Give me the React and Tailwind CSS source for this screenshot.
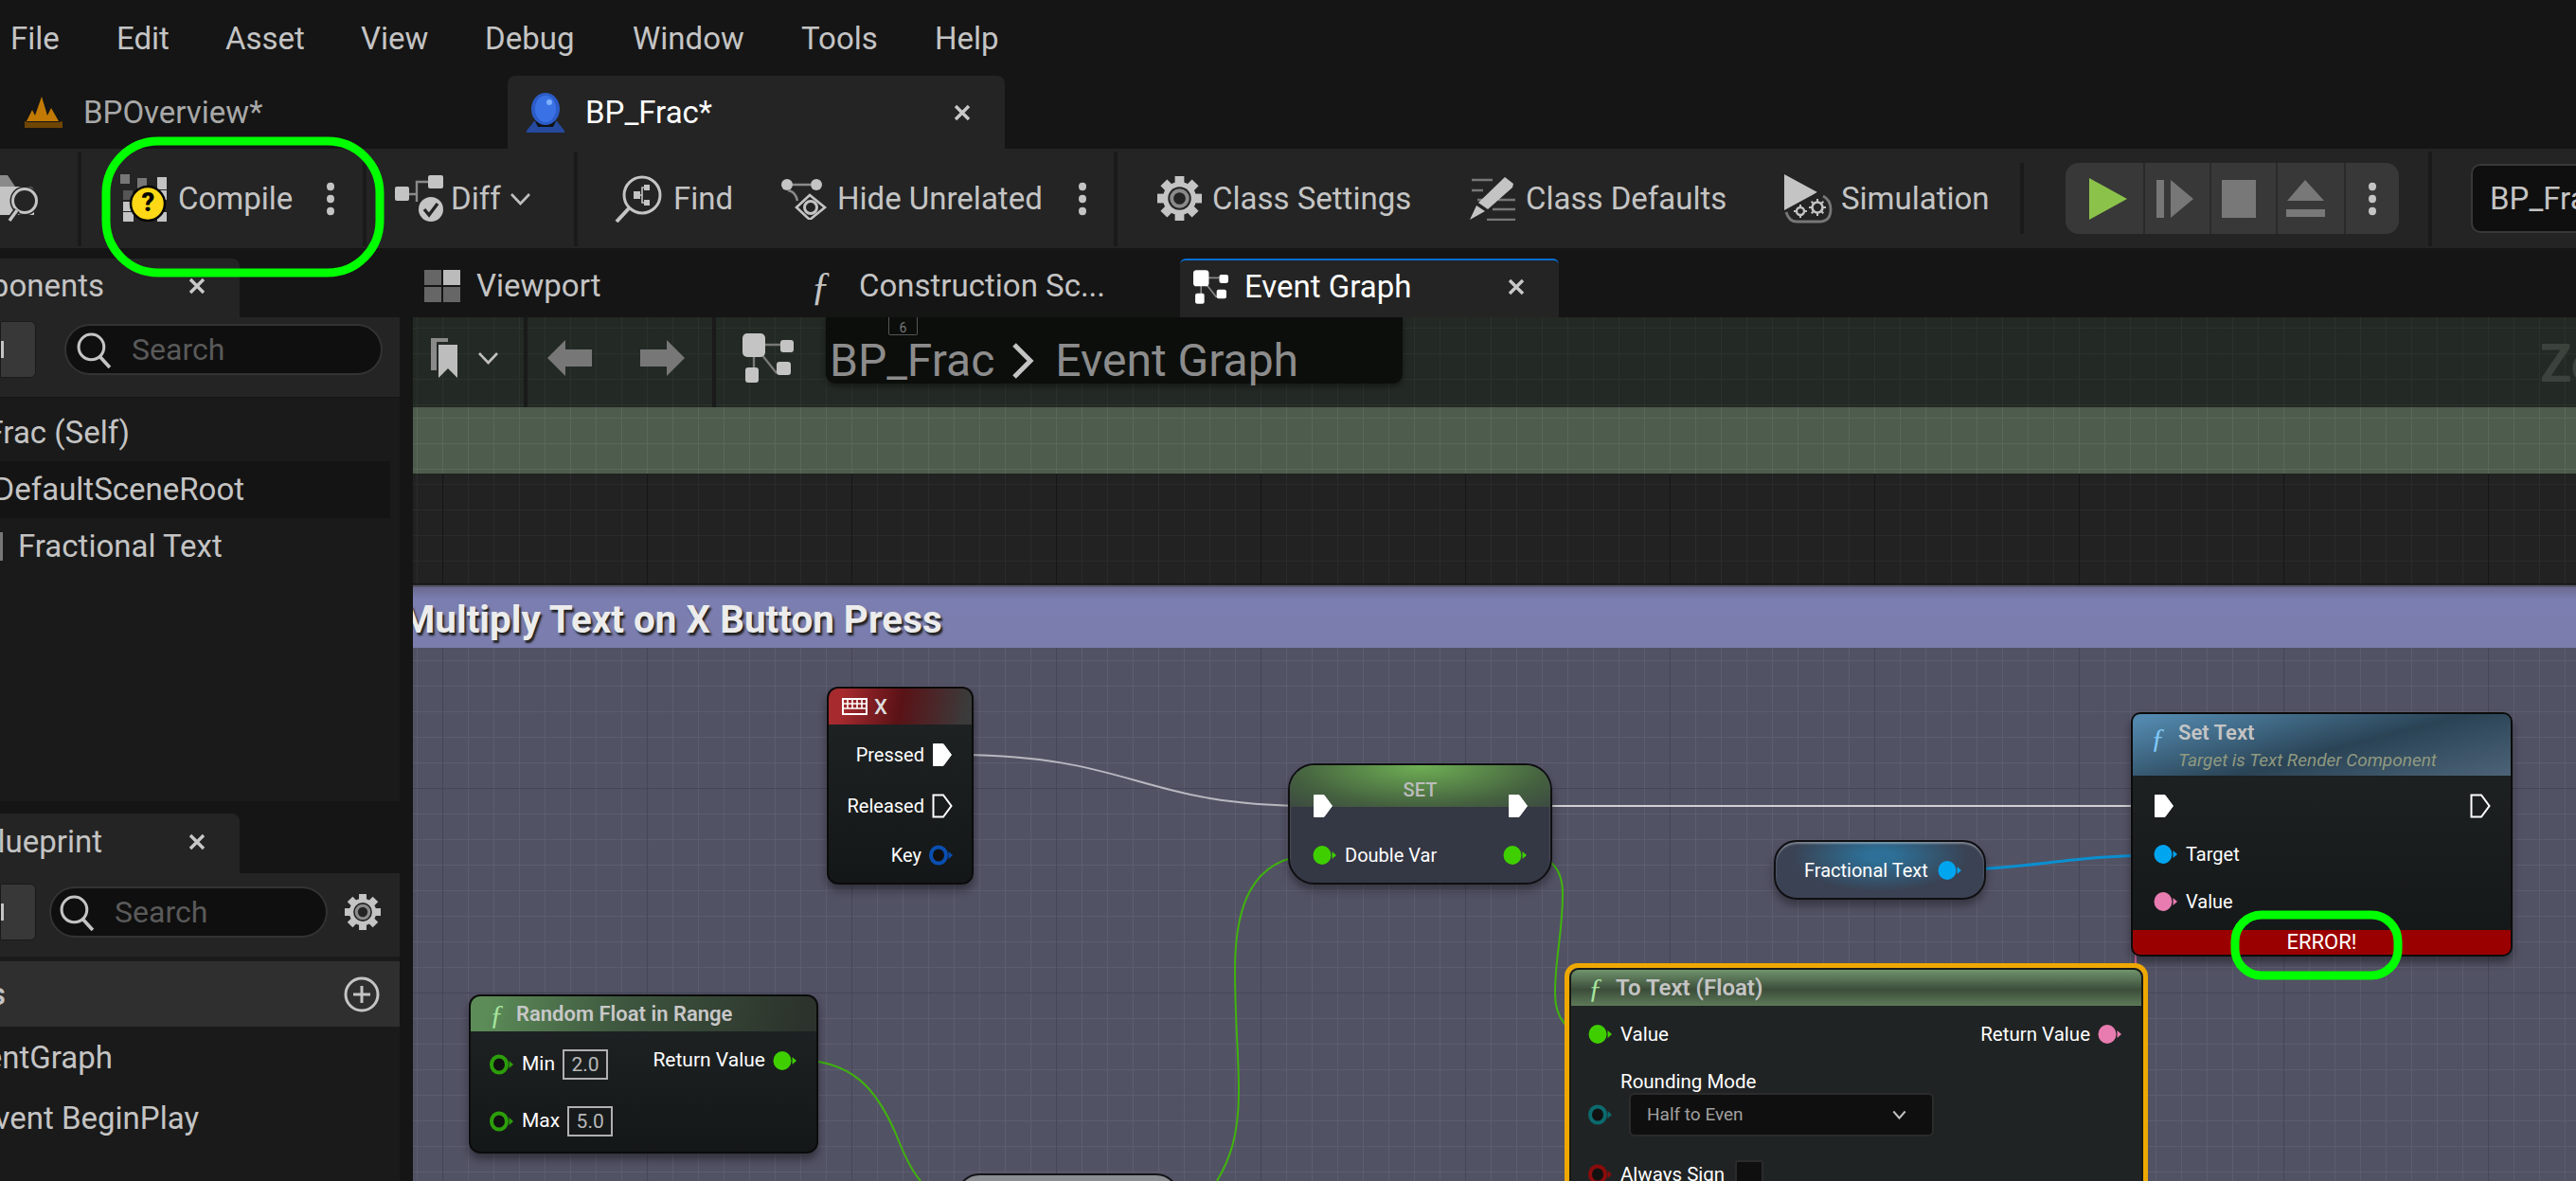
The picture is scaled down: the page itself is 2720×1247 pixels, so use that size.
import React from "react";

const Sep = ({ cls = "h-[100px]" }) => <div className={`w-1 shrink-0 bg-[#1a1a1a] ${cls}`} />;

const Dots = ({ cls = "" }) => (
  <svg width="12" height="36" viewBox="0 0 12 36" className={`shrink-0 ${cls}`}>
    <ellipse cx="6" cy="5" rx="4" ry="4.2" fill="#c4c4c4" />
    <ellipse cx="6" cy="18" rx="4" ry="4.2" fill="#c4c4c4" />
    <ellipse cx="6" cy="31" rx="4" ry="4.2" fill="#c4c4c4" />
  </svg>
);

const CloseX = ({ cls = "" }) => (
  <svg width="20" height="20" viewBox="0 0 20 20" className={`shrink-0 ${cls}`}>
    <path d="M3 3 17 17M17 3 3 17" stroke="#c8c8c8" strokeWidth="3.4" />
  </svg>
);

const Chevron = ({ w = 23, h = 14, c = "#c0c0c0", sw = 2.6 }) => (
  <svg width={w} height={h} viewBox="0 0 23 14" className="shrink-0" preserveAspectRatio="none">
    <path d="M2 2 11.5 12 21 2" fill="none" stroke={c} strokeWidth={sw} />
  </svg>
);

const Mag = ({ size = 38, c = "#c4c4c4" }) => (
  <svg width={size} height={size} viewBox="0 0 38 38" className="shrink-0">
    <circle cx="16" cy="16" r="13" fill="none" stroke={c} strokeWidth="3" />
    <path d="M25 26 35 37" stroke={c} strokeWidth="3.6" />
  </svg>
);

const CompileIcon = () => (
  <div className="relative w-[50px] h-[52px] shrink-0">
    <svg width="50" height="50" viewBox="0 0 50 50" className="absolute top-0 left-0">
      <rect x="0" y="0" width="10" height="10" fill="#777" />
      <rect x="18" y="4" width="10" height="12" fill="#777" />
      <rect x="39" y="3" width="10" height="13" fill="#c4c4c4" />
      <rect x="3" y="17" width="10" height="10" fill="#555" />
      <rect x="3" y="29" width="10" height="10" fill="#c4c4c4" />
      <rect x="3" y="40" width="11" height="10" fill="#c4c4c4" />
      <rect x="39" y="17" width="10" height="10" fill="#c4c4c4" />
      <rect x="39" y="40" width="10" height="10" fill="#c4c4c4" />
      <ellipse cx="29" cy="31" rx="18" ry="18" fill="#ffd816" stroke="#050505" strokeWidth="2.5" />
    </svg>
    <span className="absolute left-[21px] top-[14px] w-[17px] text-center text-[27px] leading-[32px] font-black text-black">?</span>
  </div>
);

const CameraIcon = () => (
  <svg width="44" height="52" viewBox="0 0 44 52" className="shrink-0">
    <path d="M0 2H10L18 14H0Z" fill="#8a8a8a" />
    <path d="M0 14H32Q38 14 38 20V44H0Z" fill="#c4c4c4" />
    <circle cx="28" cy="29" r="15.5" fill="#242424" />
    <circle cx="28" cy="29" r="12.5" fill="#242424" stroke="#c4c4c4" strokeWidth="3" />
    <path d="M20 39 12 50" stroke="#242424" strokeWidth="7" />
    <path d="M20 39 12 50" stroke="#c4c4c4" strokeWidth="3.4" />
  </svg>
);

const DiffIcon = () => (
  <svg width="52" height="50" viewBox="0 0 52 50" className="shrink-0">
    <rect x="0" y="12" width="15" height="15" rx="2" fill="#c4c4c4" />
    <rect x="35" y="0" width="16" height="14" rx="2" fill="#c4c4c4" />
    <path d="M15 20H23V7H35M23 20V28" fill="none" stroke="#8a8a8a" strokeWidth="2.4" />
    <circle cx="38" cy="36" r="13" fill="#c4c4c4" />
    <path d="M31 36 36 42 45 30" fill="none" stroke="#242424" strokeWidth="3.4" />
  </svg>
);

const FindIcon = () => (
  <svg width="50" height="50" viewBox="0 0 50 50" className="shrink-0">
    <circle cx="29" cy="21" r="19" fill="none" stroke="#c4c4c4" strokeWidth="3" />
    <path d="M15 35 2 49" stroke="#c4c4c4" strokeWidth="4" />
    <rect x="20" y="17" width="7" height="8" fill="#c4c4c4" />
    <rect x="31" y="10" width="6" height="6" fill="#c4c4c4" />
    <rect x="31" y="26" width="6" height="6" fill="#c4c4c4" />
    <path d="M27 21H29V13H31M29 21V29H31" fill="none" stroke="#c4c4c4" strokeWidth="1.6" />
  </svg>
);

const HideIcon = () => (
  <svg width="50" height="44" viewBox="0 0 50 44" className="shrink-0">
    <circle cx="7" cy="7" r="6" fill="#c4c4c4" />
    <circle cx="38" cy="7" r="6" fill="#c4c4c4" />
    <path d="M13 7H32M8 13Q16 14 18 24" fill="none" stroke="#8a8a8a" strokeWidth="2.6" />
    <path d="M17 31 31 18 47 31 31 44Z" fill="none" stroke="#c4c4c4" strokeWidth="2.6" />
    <circle cx="32" cy="31" r="6.5" fill="none" stroke="#c4c4c4" strokeWidth="3" />
  </svg>
);

const Gear = ({ size = 47, hole = "#8a8a8a", bg = "#242424" }) => (
  <svg width={size} height={size} viewBox="0 0 48 48" className="shrink-0">
    <g fill="#c4c4c4">
      {[0, 45, 90, 135, 180, 225, 270, 315].map((a) => (
        <rect key={a} x="19" y="0" width="10" height="12" transform={`rotate(${a} 24 24)`} />
      ))}
      <circle cx="24" cy="24" r="18" />
    </g>
    <circle cx="24" cy="24" r="12.5" fill={bg} />
    <circle cx="24" cy="24" r="8.5" fill="none" stroke={hole} strokeWidth="4" />
  </svg>
);

const DefaultsIcon = () => (
  <svg width="48" height="46" viewBox="0 0 48 46" className="shrink-0">
    <path d="M2 3H24M2 14H14M8 24H14M30 24H48M24 34H48M18 45H48" stroke="#777" strokeWidth="2.4" />
    <path d="M37 0 46 7 45 11 19 34 9 27Z" fill="#c4c4c4" />
    <path d="M7 30 16 36 0 45Z" fill="#c4c4c4" />
  </svg>
);

const SimIcon = () => (
  <svg width="52" height="52" viewBox="0 0 52 52" className="shrink-0">
    <path d="M1 0 36 19 1 38Z" fill="#c4c4c4" />
    <path d="M38 20 9 40" stroke="#242424" strokeWidth="4" />
    <path d="M3 40Q6 50 14 50H38Q50 50 50 37 50 27 42 23" fill="none" stroke="#777" strokeWidth="2.8" />
    <circle cx="36" cy="35" r="5.5" fill="none" stroke="#c4c4c4" strokeWidth="2.6" />
    <circle cx="18" cy="39" r="4" fill="none" stroke="#c4c4c4" strokeWidth="2.4" />
    <path d="M36 26V44M27 35H45M29.6 28.6 42.4 41.4M42.4 28.6 29.6 41.4" stroke="#c4c4c4" strokeWidth="2" strokeDasharray="3 12" />
    <path d="M18 32V46M11 39H25" stroke="#c4c4c4" strokeWidth="2" strokeDasharray="3 8" />
  </svg>
);

const Crown = () => (
  <svg width="40" height="34" viewBox="0 0 40 34" className="shrink-0">
    <path d="M2 26 8 14 11 20 18 0 24 20 28 12 36 26Z" fill="#c27a05" />
    <path d="M0 26 4 27H36L40 26V33H0Z" fill="#6e4503" />
  </svg>
);

const BlueBall = () => (
  <svg width="40" height="42" viewBox="0 0 40 42" className="shrink-0">
    <path d="M8 30H32L40 40V42H0V40Z" fill="#254a9e" />
    <path d="M9 30H31L28 36H12Z" fill="#111" />
    <ellipse cx="20" cy="17" rx="15" ry="17" fill="#2c5cc8" />
    <ellipse cx="20" cy="17" rx="11" ry="14" fill="#3a72e6" />
    <ellipse cx="24" cy="10" rx="3" ry="3" fill="#7fb0ff" />
  </svg>
);

const GraphIcon = ({ main = "#c4c4c4", line = "#777", w = 54, h = 52 }) => (
  <svg width={w} height={h} viewBox="0 0 54 52" className="shrink-0">
    <path d="M12 12H40M12 12V42M12 12 36 42" fill="none" stroke={line} strokeWidth="2.4" />
    <rect x="0" y="0" width="24" height="25" rx="5" fill={main} />
    <rect x="40" y="7" width="14" height="13" rx="3" fill={main} />
    <rect x="3" y="36" width="14" height="16" rx="3" fill={main} />
    <rect x="36" y="30" width="15" height="14" rx="3" fill={main} />
  </svg>
);

const FGlyph = ({ cls = "", color = "#c4c4c4" }) => (
  <span className={`font-['Liberation_Serif',serif] italic shrink-0 ${cls}`} style={{ color }}>ƒ</span>
);

const Exec = ({ filled = true, cls = "" }) => (
  <svg width="22" height="26" viewBox="0 0 22 26" className={`shrink-0 ${cls}`}>
    <path d="M1.5 1.5H12L20.5 13 12 24.5H1.5Z" fill={filled ? "#fff" : "none"} stroke="#fff" strokeWidth={filled ? 1 : 2} />
  </svg>
);

const Pin = ({ color, filled = true, cls = "" }) => (
  <svg width="26" height="24" viewBox="0 0 26 24" className={`shrink-0 ${cls}`}>
    {filled ? (
      <ellipse cx="10" cy="12" rx="9.5" ry="10" fill={color} />
    ) : (
      <ellipse cx="10" cy="12" rx="8" ry="8.5" fill="#111" stroke={color} strokeWidth="4" />
    )}
    <path d="M20.5 8 25 12 20.5 16Z" fill={color} />
  </svg>
);

const MenuBar = () => (
  <div className="h-[80px] pt-[2px] flex items-center text-[33px] text-[#c4c4c4] shrink-0">
    <span className="ml-[11px] w-[112px]">File</span>
    <span className="w-[115px]">Edit</span>
    <span className="w-[143px]">Asset</span>
    <span className="w-[131px]">View</span>
    <span className="w-[156px]">Debug</span>
    <span className="w-[178px]">Window</span>
    <span className="w-[141px]">Tools</span>
    <span>Help</span>
  </div>
);

const TabRow = () => (
  <div className="h-[77px] flex items-end shrink-0">
    <div className="w-[536px] h-[77px] flex items-center pl-[26px] text-[33px] text-[#a8a8a8]">
      <Crown />
      <span className="ml-[22px]">BPOverview*</span>
    </div>
    <div className="w-[525px] h-[77px] bg-[#242424] rounded-t-[8px] flex items-center pl-[20px] text-[33px] text-white">
      <BlueBall />
      <span className="ml-[22px]">BP_Frac*</span>
      <CloseX cls="ml-auto mr-[35px]" />
    </div>
  </div>
);

const TxtBtn = ({ children, cls = "" }) => <span className={`text-[33px] text-[#c4c4c4] whitespace-nowrap ${cls}`}>{children}</span>;

const Toolbar = () => (
  <div className="h-[105px] bg-[#242424] flex items-center shrink-0 overflow-hidden">
    <div className="w-[84px] pb-[2px] flex items-center shrink-0 -ml-[2px]"><CameraIcon /></div>
    <Sep />
    <div className="w-[297px] flex items-center shrink-0 pl-[41px]">
      <CompileIcon />
      <TxtBtn cls="ml-[11px] w-[155px]">Compile</TxtBtn>
      <Dots />
    </div>
    <Sep />
    <div className="w-[219px] flex items-center shrink-0 pl-[30px]">
      <DiffIcon />
      <TxtBtn cls="ml-[7px] w-[62px]">Diff</TxtBtn>
      <Chevron />
    </div>
    <Sep />
    <div className="w-[566px] flex items-center shrink-0 pl-[39px]">
      <FindIcon />
      <TxtBtn cls="ml-[12px] w-[113px]">Find</TxtBtn>
      <HideIcon />
      <TxtBtn cls="ml-[10px] w-[253px]">Hide Unrelated</TxtBtn>
      <Dots />
    </div>
    <Sep />
    <div className="w-[953px] flex items-center shrink-0 pl-[42px]">
      <Gear />
      <TxtBtn cls="ml-[11px] w-[272px]">Class Settings</TxtBtn>
      <DefaultsIcon />
      <TxtBtn cls="ml-[11px] w-[272px]">Class Defaults</TxtBtn>
      <SimIcon />
      <TxtBtn cls="ml-[9px]">Simulation</TxtBtn>
    </div>
    <Sep cls="h-[75px]" />
    <div className="w-[427px] flex items-center shrink-0 pl-[44px]">
      <div className="w-[352px] h-[75px] bg-[#383838] rounded-[14px] flex items-center overflow-hidden">
        <div className="w-[84px] h-full flex items-center pl-[24px] border-r-2 border-[#2a2a2a]">
          <svg width="42" height="44" viewBox="0 0 42 44"><path d="M1 0 41 22 1 44Z" fill="#8bc34a" /></svg>
        </div>
        <div className="w-[70px] h-full flex items-center pl-[12px] border-r-2 border-[#2a2a2a]">
          <svg width="40" height="40" viewBox="0 0 40 40"><rect x="0" y="0" width="8" height="40" fill="#777" /><path d="M15 0 39 20 15 40Z" fill="#777" /></svg>
        </div>
        <div className="w-[70px] h-full flex items-center pl-[11px] border-r-2 border-[#2a2a2a]">
          <div className="w-[36px] h-[40px] bg-[#787878]" />
        </div>
        <div className="w-[72px] h-full flex items-center pl-[9px] border-r-2 border-[#2a2a2a]">
          <svg width="41" height="40" viewBox="0 0 41 40"><path d="M20 0 40 22H1Z" fill="#787878" /><rect x="0" y="31" width="41" height="8" fill="#787878" /></svg>
        </div>
        <div className="flex-1 flex justify-center"><Dots /></div>
      </div>
    </div>
    <Sep />
    <div className="flex-1 pl-[41px]">
      <div className="w-[200px] h-[73px] bg-[#0f0f0f] border-2 border-[#383838] rounded-[10px] flex items-center pl-[18px] text-[33px] text-[#c4c4c4]">BP_Frac</div>
    </div>
  </div>
);

const SearchRow = ({ rowCls, pillCls, textCls, extra }) => (
  <div className={`bg-[#242424] flex items-center shrink-0 ${rowCls}`}>
    <div className="w-[38px] h-[60px] bg-[#383838] rounded-r-[6px] border border-[#1a1a1a] shrink-0 flex items-center">
      <div className="w-[3px] h-[18px] bg-[#c4c4c4]" />
    </div>
    <div className={`h-[54px] rounded-full bg-[#0f0f0f] border-2 border-[#333] flex items-center shrink-0 ${pillCls}`}>
      <Mag size={39} />
      <span className={`text-[32px] text-[#5a5a5a] ${textCls}`}>Search</span>
    </div>
    {extra}
  </div>
);

const RightText = ({ w, children, cls = "" }) => (
  <div className={`flex justify-end whitespace-nowrap ${w} ${cls}`}>{children}</div>
);

const LeftPanel = () => (
  <div className="w-[422px] shrink-0 flex flex-col overflow-hidden">
    <div className="h-[85px] shrink-0">
      <SearchRow rowCls="h-[84px] pb-[16px]" pillCls="ml-[30px] w-[336px] pl-[10px]" textCls="ml-[20px]" />
    </div>
    <div className="h-[426px] bg-[#1a1a1a] shrink-0 flex flex-col pt-[7px] text-[33px] text-[#c4c4c4]">
      <div className="h-[60px] flex items-center"><RightText w="w-[137px]">BP_Frac (Self)</RightText></div>
      <div className="h-[60px] flex items-center bg-[#141414] w-[412px]"><RightText w="w-[258px]">DefaultSceneRoot</RightText></div>
      <div className="h-[60px] flex items-center">
        <div className="w-[3px] h-[30px] bg-[#777]" />
        <span className="ml-[16px]">Fractional Text</span>
      </div>
    </div>
    <div className="h-[13px] shrink-0" />
    <div className="h-[63px] w-[253px] bg-[#242424] rounded-tr-[8px] shrink-0 flex items-center pb-[3px] text-[33px] text-[#c4c4c4]">
      <RightText w="w-[108px]">My Blueprint</RightText>
      <CloseX cls="ml-[90px]" />
    </div>
    <SearchRow rowCls="h-[88px] pb-[6px]" pillCls="ml-[14px] w-[294px] pl-[8px]" textCls="ml-[20px]"
      extra={<div className="ml-[18px]"><Gear size={38} /></div>} />
    <div className="h-[5px] bg-[#1a1a1a] shrink-0" />
    <div className="h-[69px] bg-[#2f2f2f] shrink-0 flex items-center text-[33px] font-medium text-[#c4c4c4]">
      <RightText w="w-[6px]">Graphs</RightText>
      <svg width="38" height="38" viewBox="0 0 38 38" className="ml-[357px]">
        <circle cx="19" cy="19" r="17" fill="none" stroke="#c4c4c4" strokeWidth="3" />
        <path d="M19 10V28M10 19H28" stroke="#c4c4c4" strokeWidth="3" />
      </svg>
    </div>
    <div className="flex-1 bg-[#1a1a1a] text-[33px] text-[#c4c4c4] flex flex-col pt-[1px]">
      <div className="h-[64px] flex items-center"><RightText w="w-[119px]">EventGraph</RightText></div>
      <div className="h-[64px] flex items-center"><RightText w="w-[210px]">Event BeginPlay</RightText></div>
    </div>
  </div>
);

const DocTabs = () => (
  <div className="h-[73px] flex items-end shrink-0 text-[33px]">
    <div className="w-[253px] h-[62px] pb-[4px] bg-[#242424] rounded-tr-[8px] flex items-center text-[#c4c4c4]">
      <RightText w="w-[110px]">Components</RightText>
      <CloseX cls="ml-[88px]" />
    </div>
    <div className="w-[993px] h-[62px] pb-[4px] flex items-center text-[#c4c4c4]">
      <svg width="38" height="34" viewBox="0 0 38 34" className="ml-[195px] shrink-0">
        <rect x="0" y="0" width="18" height="16" fill="#666" /><rect x="20" y="0" width="18" height="16" fill="#bbb" />
        <rect x="0" y="18" width="18" height="16" fill="#666" /><rect x="20" y="18" width="18" height="16" fill="#666" />
      </svg>
      <span className="ml-[17px] w-[353px]">Viewport</span>
      <FGlyph cls="text-[42px] leading-none" />
      <span className="ml-[30px] whitespace-nowrap">Construction Sc...</span>
    </div>
    <div className="w-[400px] h-[62px] pb-[4px] bg-[#242424] rounded-t-[6px] border-t-2 border-[#0a6ed1] flex items-center pl-[14px] text-white">
      <GraphIcon main="#fff" line="#888" w={37} h={36} />
      <span className="ml-[17px]">Event Graph</span>
      <CloseX cls="ml-auto mr-[35px]" />
    </div>
  </div>
);

const Wires = () => (
  <svg width="2284" height="912" viewBox="436 335 2284 912" className="absolute top-0 left-0">
    <g fill="none">
      <path d="M1005 797C1200 797 1200 851 1386 851" stroke="#b8b8c0" strokeWidth="2" />
      <path d="M1610 851H2274" stroke="#d0d0d4" strokeWidth="2" />
      <path d="M1385 903C1320 905 1304 960 1304 1024 1304 1080 1308 1110 1308 1153 1308 1200 1298 1225 1285 1247" stroke="#3fb40c" strokeWidth="2" />
      <path d="M840 1119C900 1119 925 1150 945 1195 955 1220 962 1235 972 1247" stroke="#3fb40c" strokeWidth="2" />
      <path d="M1612 903C1635 903 1650 915 1650 944 1650 985 1642 1010 1642 1049 1642 1075 1655 1092 1680 1092" stroke="#3fb40c" strokeWidth="2" />
      <path d="M2070 918C2140 918 2190 903 2276 903" stroke="#0a8fd0" strokeWidth="3" />
      <path d="M2275 953C2262 953 2255 965 2255 985V1020" stroke="#d66a9e" strokeWidth="2" />
    </g>
  </svg>
);

const NodeBody = "bg-[linear-gradient(to_bottom,#202425,#141718)] border-2 border-[#0b0b0b] shadow-[0_6px_10px_rgba(0,0,0,0.4)]";

const KeyNode = () => (
  <div className={`absolute left-[437px] top-[390px] w-[155px] h-[209px] rounded-[12px] overflow-hidden text-[20px] text-white ${NodeBody}`}>
    <div className="h-[38px] bg-[linear-gradient(100deg,#a62a2e_10%,#5a1216_50%,#3b3b3b_95%)] flex items-center pl-[14px]">
      <svg width="27" height="18" viewBox="0 0 27 18">
        <rect x="1" y="1" width="25" height="16" fill="none" stroke="#fff" strokeWidth="2" />
        <path d="M1 6H26M1 11H26" stroke="#fff" strokeWidth="1.6" />
        <path d="M6 1V11M11 1V11M16 1V11M21 1V11" stroke="#fff" strokeWidth="1.6" />
      </svg>
      <span className="ml-[7px] text-[22px] font-medium text-[#dcdcdc]">X</span>
    </div>
    <div className="flex flex-col items-end pr-[20px] pt-[5px]">
      <div className="h-[54px] flex items-center">Pressed<Exec cls="ml-[8px]" /></div>
      <div className="h-[54px] flex items-center">Released<Exec filled={false} cls="ml-[8px]" /></div>
      <div className="h-[50px] flex items-center mr-[-1px]">Key<Pin color="#0a4fb0" filled={false} cls="ml-[8px]" /></div>
    </div>
  </div>
);

const SetNode = () => (
  <div className="absolute left-[924px] top-[471px] w-[279px] h-[128px] rounded-[28px] overflow-hidden bg-[#343744] border-2 border-[#0f0f12] shadow-[0_6px_10px_rgba(0,0,0,0.35),inset_0_2px_2px_rgba(255,255,255,0.35)] text-[20px] text-white">
    <div className="absolute top-0 left-0 right-0 h-[44px] bg-[radial-gradient(ellipse_at_50%_0%,#6fb054,#44603f_70%,#3d4a42)]" />
    <span className="absolute left-0 right-0 top-[11px] text-center text-[#bcbcbc] font-medium">SET</span>
    <div className="relative flex flex-col pt-[30px]">
      <div className="h-[26px] flex justify-between items-center pl-[24px] pr-[23px]"><Exec /><Exec /></div>
      <div className="h-[24px] mt-[27px] flex items-center pl-[24px] pr-[24px]">
        <Pin color="#3fcf00" /><span className="ml-[8px]">Double Var</span><Pin color="#3fcf00" cls="ml-auto" />
      </div>
    </div>
  </div>
);

const RandomNode = () => (
  <div className={`absolute left-[59px] top-[715px] w-[369px] h-[168px] rounded-[12px] overflow-hidden text-[21px] text-white ${NodeBody}`}>
    <div className="h-[37px] bg-[linear-gradient(100deg,#5c8c58_5%,#3d553e_45%,#2c332c_95%)] flex items-center pl-[20px]">
      <FGlyph cls="text-[30px] leading-none" color="#a6e39e" />
      <span className="ml-[13px] text-[22px] font-semibold text-[#c8c8c8] whitespace-nowrap">Random Float in Range</span>
    </div>
    <div className="relative flex flex-col pl-[20px]">
      <div className="h-[60px] mt-[5px] flex items-center"><Pin color="#2c9e0a" filled={false} /><span className="ml-[8px]">Min</span><span className="ml-[8px] w-[48px] h-[32px] border-2 border-[#b0b0b0] text-center leading-[28px] text-[#b8b8b8]">2.0</span></div>
      <div className="h-[60px] flex items-center"><Pin color="#2c9e0a" filled={false} /><span className="ml-[8px]">Max</span><span className="ml-[8px] w-[48px] h-[32px] border-2 border-[#b0b0b0] text-center leading-[28px] text-[#b8b8b8]">5.0</span></div>
      <div className="absolute right-[20px] top-[15px] flex items-center text-[21px]">Return Value<Pin color="#3fcf00" cls="ml-[8px]" /></div>
    </div>
  </div>
);

const FractionalNode = () => (
  <div className="absolute left-[1437px] top-[552px] w-[224px] h-[63px] rounded-[24px] overflow-hidden bg-[radial-gradient(ellipse_at_50%_25%,#2d6f96_10%,#3a4253_60%)] border-2 border-[#0f0f12] shadow-[0_6px_10px_rgba(0,0,0,0.35),inset_0_2px_2px_rgba(255,255,255,0.35)] flex items-center pl-[30px] text-[20px] text-white">
    <span className="whitespace-nowrap w-[141px]">Fractional Text</span>
    <Pin color="#00a5f0" />
  </div>
);

const SetTextNode = () => (
  <div className={`absolute left-[1814px] top-[417px] w-[403px] h-[258px] rounded-[10px] overflow-hidden text-[20px] text-white flex flex-col ${NodeBody}`}>
    <div className="h-[65px] bg-[linear-gradient(165deg,#5288ad_5%,#2a4355_55%,#4d6478)] flex flex-col pl-[48px] relative shrink-0">
      <FGlyph cls="absolute left-[19px] top-[10px] text-[30px] leading-none" color="#7fc8f8" />
      <span className="mt-[3px] text-[22px] font-semibold text-[#c4c4c4]">Set Text</span>
      <span className="text-[19px] italic text-[#8f9a80] whitespace-nowrap -mt-[1px]">Target is Text Render Component</span>
    </div>
    <div className="flex-1 flex flex-col pl-[22px] pr-[21px] pt-[19px]">
      <div className="h-[26px] flex justify-between items-center"><Exec /><Exec filled={false} /></div>
      <div className="h-[24px] mt-[26px] flex items-center"><Pin color="#00a5f0" /><span className="ml-[8px]">Target</span></div>
      <div className="h-[24px] mt-[26px] flex items-center"><Pin color="#e87cb0" /><span className="ml-[8px]">Value</span></div>
    </div>
    <div className="h-[26px] bg-[#9b0000] text-center text-[22px] leading-[26px] shrink-0">ERROR!</div>
  </div>
);

const ToTextNode = () => (
  <div className="absolute left-[1216px] top-[682px] w-[616px] h-[300px] border-[5px] border-b-0 border-[#eea800] rounded-t-[14px] text-[20.5px] text-white">
    <div className="h-full bg-[#202324] rounded-t-[10px] overflow-hidden flex flex-col border-x-2 border-t-2 border-[#1a1a14]">
      <div className="h-[38px] bg-[linear-gradient(to_bottom,#6f946c,#3c4d3a_55%,#5d7a58)] flex items-center pl-[18px] shrink-0">
        <FGlyph cls="text-[30px] leading-none" color="#a6e39e" />
        <span className="ml-[14px] text-[24px] font-semibold text-[#c4c4c4] whitespace-nowrap">To Text (Float)</span>
      </div>
      <div className="flex flex-col pl-[18px] pr-[20px]">
        <div className="h-[24px] mt-[18px] flex items-center">
          <Pin color="#3fcf00" /><span className="ml-[8px]">Value</span>
          <span className="ml-auto">Return Value</span><Pin color="#e87cb0" cls="ml-[8px]" />
        </div>
        <div className="h-[24px] mt-[26px] pl-[34px] flex items-center whitespace-nowrap">Rounding Mode</div>
        <div className="h-[46px] flex items-center">
          <Pin color="#0b6a6e" filled={false} />
          <div className="ml-[17px] w-[322px] h-[46px] bg-[#0f0f0f] border-2 border-[#2b2b2b] rounded-[6px] flex items-center pl-[17px] text-[19px] text-[#a0a0a0]">
            Half to Even
            <span className="ml-[157px] flex"><Chevron w={15} h={10} sw={3} /></span>
          </div>
        </div>
        <div className="h-[24px] mt-[28px] flex items-center">
          <Pin color="#8a0c0c" filled={false} /><span className="ml-[8px] whitespace-nowrap">Always Sign</span>
          <span className="ml-[11px] w-[30px] h-[30px] bg-[#0f0f0f] border-2 border-[#2b2b2b] rounded-[3px] shrink-0" />
        </div>
      </div>
    </div>
  </div>
);

const GraphPanel = () => (
  <div className="relative flex-1 flex flex-col overflow-hidden">
    <div className="h-[95px] shrink-0 relative bg-[#232924] bg-[linear-gradient(to_right,#2b322c_1px,transparent_1px),linear-gradient(to_bottom,#2b322c_1px,transparent_1px)] bg-[size:27px_27px] bg-[position:4px_11px] flex items-start">
      <div className="h-[85px] pl-[19px] flex items-center shrink-0 w-[117px]">
        <svg width="30" height="42" viewBox="0 0 30 42">
          <path d="M0 0H18V4H6V34H0Z" fill="#8a8a8a" />
          <path d="M8 7H28V42L18 32 8 42Z" fill="#bdbdbd" />
        </svg>
        <span className="ml-[19px] flex"><Chevron /></span>
      </div>
      <div className="w-1 h-[95px] bg-[#1a1a1a] shrink-0" />
      <div className="h-[85px] w-[195px] pl-[21px] flex items-center shrink-0">
        <svg width="47" height="38" viewBox="0 0 47 38"><path d="M0 19 19 0V10H47V28H19V38Z" fill="#777" /></svg>
        <svg width="47" height="38" viewBox="0 0 47 38" className="ml-[51px]"><path d="M47 19 28 0V10H0V28H28V38Z" fill="#777" /></svg>
      </div>
      <div className="w-1 h-[95px] bg-[#1a1a1a] shrink-0" />
      <div className="h-[85px] w-[116px] pl-[28px] flex items-center shrink-0"><GraphIcon /></div>
      <div className="relative w-[609px] h-[70px] bg-[#0c0e0c] rounded-b-[10px] shadow-[0_3px_6px_rgba(0,0,0,0.4)] flex items-center pl-[4px] text-[48px] text-[#8c8c8c] shrink-0">
        <div className="absolute left-[66px] top-0 w-[31px] h-[19px] border-x border-b border-[#555] flex items-end justify-center text-[14px] leading-none text-[#777] rounded-b-[2px]">6</div>
        <span className="mt-[22px]">BP_Frac</span>
        <svg width="26" height="38" viewBox="0 0 26 38" className="ml-[17px] mt-[22px]"><path d="M4 2 21 19 4 36" fill="none" stroke="#c4c4c4" strokeWidth="5" /></svg>
        <span className="ml-[21px] mt-[22px]">Event Graph</span>
      </div>
      <span className="absolute left-[2246px] top-[8px] text-[55px] font-bold text-[#3b433c] whitespace-nowrap">Zoom</span>
    </div>
    <div className="h-[70px] shrink-0 bg-[#4e5c4d] bg-[linear-gradient(to_right,#5a685a_1px,transparent_1px),linear-gradient(to_bottom,#5a685a_1px,transparent_1px)] bg-[size:27px_27px] bg-[position:4px_11px] shadow-[0_2px_3px_rgba(0,0,0,0.5)]" />
    <div className="h-[118px] shrink-0 bg-[#222222] bg-[linear-gradient(to_right,#161616_1px,transparent_1px),linear-gradient(to_bottom,#161616_1px,transparent_1px),linear-gradient(to_right,#2b2b2b_1px,transparent_1px),linear-gradient(to_bottom,#2b2b2b_1px,transparent_1px)] bg-[size:216px_216px,216px_216px,27px_27px,27px_27px] bg-[position:31px_-100px,31px_-100px,4px_11px,4px_11px]" />
    <div className="h-[66px] pt-[7px] shrink-0 bg-[linear-gradient(to_bottom,#6a6a90,#7b7eb0_20%,#7a7dac)] flex items-center overflow-hidden border-t-2 border-[#55556a]">
      <span className="-ml-[12px] text-[40.4px] font-bold text-[#ececec] whitespace-nowrap [text-shadow:2px_3px_2px_#222]">Multiply Text on X Button Press</span>
    </div>
    <div className="flex-1 bg-[#525265] bg-[linear-gradient(to_right,#46465a_1px,transparent_1px),linear-gradient(to_bottom,#46465a_1px,transparent_1px),linear-gradient(to_right,#5d5d70_1px,transparent_1px),linear-gradient(to_bottom,#5d5d70_1px,transparent_1px)] bg-[size:216px_216px,216px_216px,27px_27px,27px_27px] bg-[position:31px_148px,31px_148px,4px_13px,4px_13px]" />
    <Wires />
    <KeyNode />
    <RandomNode />
    <div className="absolute left-[574px] top-[904px] w-[235px] h-[100px] rounded-t-[24px] bg-[#8a8d92] border-2 border-[#15161a]" />
    <SetNode />
    <FractionalNode />
    <SetTextNode />
    <ToTextNode />
    <svg width="190" height="80" viewBox="0 0 190 80" className="absolute left-[1919px] top-[626px]">
      <rect x="5" y="5" width="172" height="64" rx="28" fill="none" stroke="#00ff00" strokeWidth="9" />
    </svg>
  </div>
);

export default function App() {
  return (
    <div className="relative w-[2720px] h-[1247px] bg-[#151515] overflow-hidden flex flex-col font-['Roboto',sans-serif]">
      <MenuBar />
      <TabRow />
      <Toolbar />
      <DocTabs />
      <div className="flex-1 flex min-h-0 relative">
        <LeftPanel />
        <div className="w-[14px] shrink-0" />
        <GraphPanel />
      </div>
      <svg width="300" height="150" viewBox="0 0 300 150" className="absolute left-[107px] top-[144px]">
        <rect x="5" y="5" width="289" height="139" rx="55" fill="none" stroke="#00ff00" strokeWidth="9" />
      </svg>
    </div>
  );
}
